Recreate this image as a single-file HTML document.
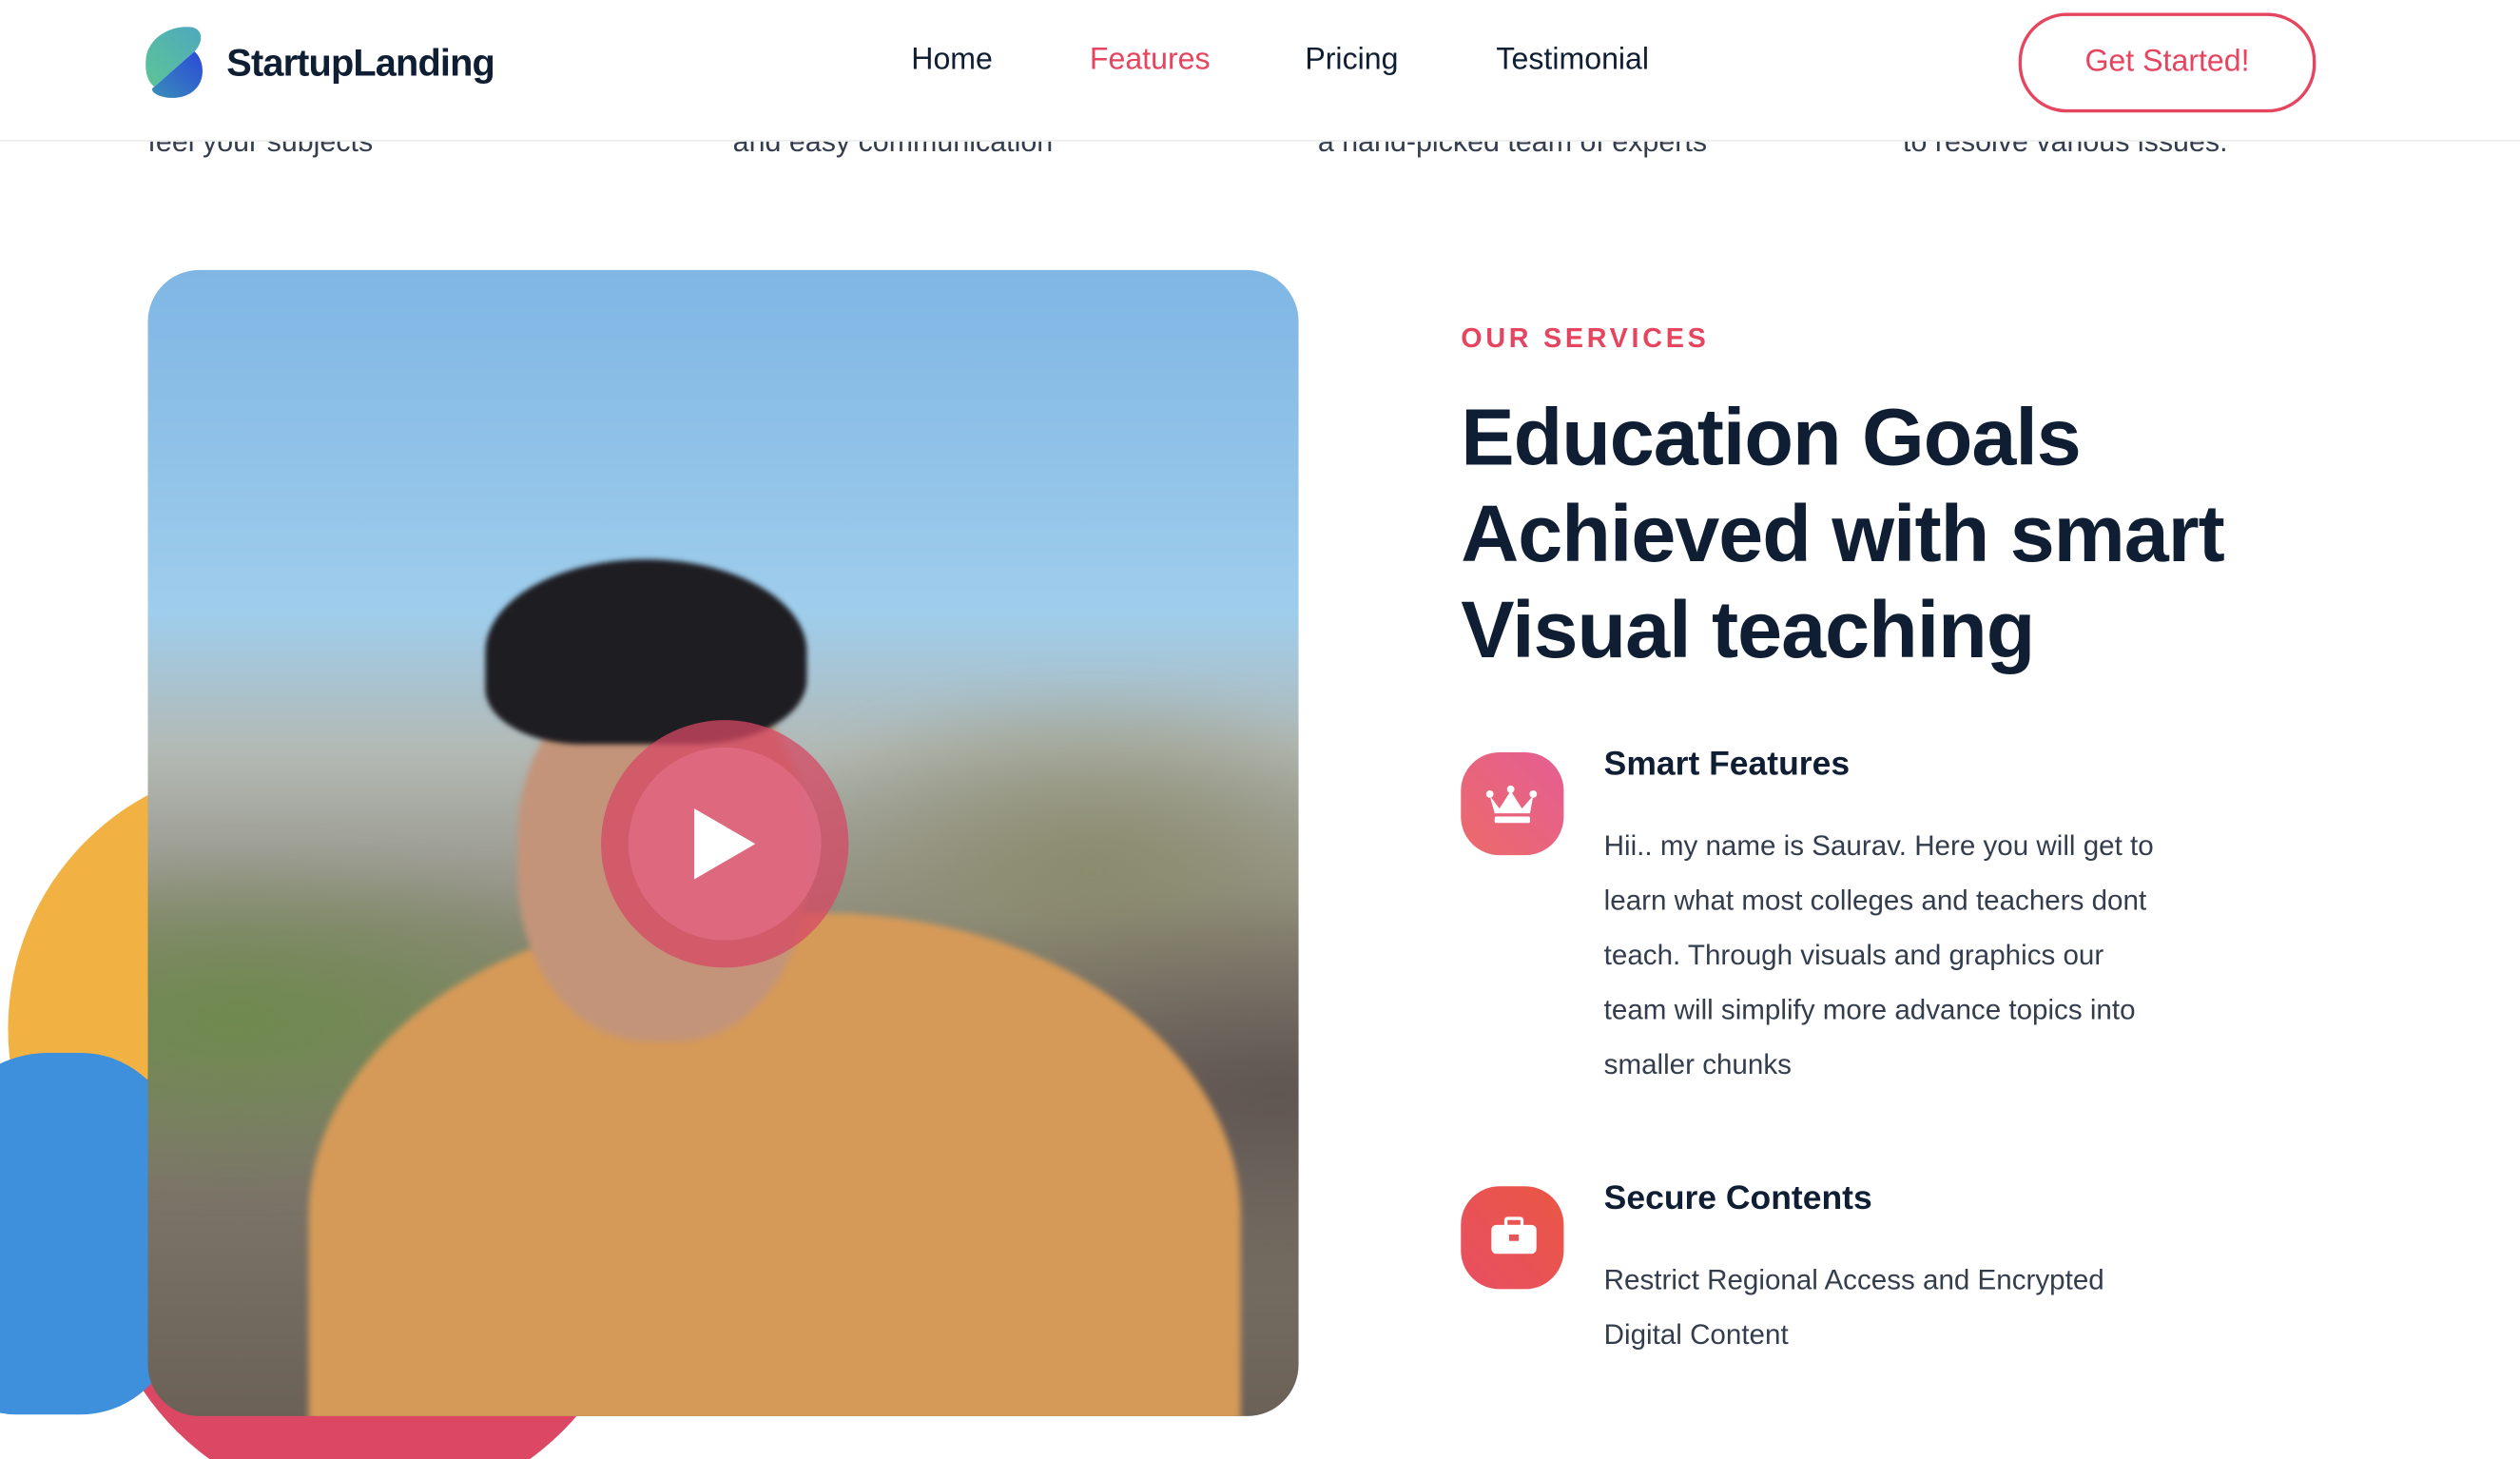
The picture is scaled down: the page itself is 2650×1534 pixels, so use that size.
<!DOCTYPE html>
<html><head><meta charset="utf-8"><style>
html,body{margin:0;padding:0;overflow:hidden;background:#fff;width:2650px;height:1534px}
#w{width:1568px;height:908px;position:relative;transform:scale(1.69005);transform-origin:0 0;font-family:"Liberation Sans",sans-serif;color:#0f1e33;overflow:hidden}
.a{position:absolute}
.nav a{position:absolute;top:27px;font-size:19px;color:#0f1e33}
.sub{font-size:18px;color:#333d4d;top:78px}
p.t{margin:0;font-size:17.5px;line-height:34px;color:#333d4d}
</style></head><body><div id="w">
<div class="a sub" style="left:92px">feel your subjects</div>
<div class="a sub" style="left:456px">and easy communication</div>
<div class="a sub" style="left:820px">a hand-picked team of experts</div>
<div class="a sub" style="left:1184px">to resolve various issues.</div>
<div class="a" style="left:0;top:0;width:1568px;height:87px;background:#fff;border-bottom:1px solid #eee"></div>
<svg class="a" style="left:90px;top:15px" width="38" height="48" viewBox="0 0 38 48"><defs><linearGradient id="g1" x1="0" y1="1" x2="1" y2="0"><stop offset="0" stop-color="#5cc597"/><stop offset="1" stop-color="#4ea8bd"/></linearGradient><linearGradient id="g2" x1="1" y1="0" x2="0" y2="1"><stop offset="0" stop-color="#2a48d8"/><stop offset="1" stop-color="#3a8fb8"/></linearGradient></defs><path d="M30 2C37 4 36 12 31 17L6 39C1 35 0 28 1 20 3 8 17 0 30 2Z" fill="url(#g1)"/><path d="M31 17C37 22 38 34 32 40 26 47 14 47 8 44 4 42 4 40 6 39Z" fill="url(#g2)"/></svg>
<div class="a" style="left:141px;top:26px;font-size:23.5px;font-weight:bold;letter-spacing:-0.5px">StartupLanding</div>
<div class="nav"><a style="left:567px">Home</a><a style="left:678px;color:#e5455f">Features</a><a style="left:812px">Pricing</a><a style="left:931px">Testimonial</a></div>
<div class="a" style="left:1256px;top:8px;width:181px;height:58px;border:2px solid #e5455f;border-radius:30px;color:#e5455f;font-size:19px;text-align:center;line-height:58px">Get Started!</div>
<div class="a" style="left:5px;top:475px;width:330px;height:330px;border-radius:50%;background:#f1b243"></div>
<div class="a" style="left:60px;top:600px;width:340px;height:340px;border-radius:50%;background:#dc4763"></div>
<div class="a" style="left:-40px;top:655px;width:150px;height:225px;border-radius:70px 60px 60px 50px;background:#3e90dc"></div>
<div class="a" style="left:92px;top:168px;width:716px;height:713px;border-radius:32px;overflow:hidden;background:linear-gradient(#7fb6e4 0%,#9fcdec 30%,#b3b9b4 42%,#8e8a7c 58%,#6b6157 100%)">
 <div class="a" style="left:-20px;top:260px;width:760px;height:460px;background:radial-gradient(ellipse at 10% 45%,#6d8a4c 0,transparent 30%),radial-gradient(ellipse at 95% 55%,#5f5450 0,transparent 35%),radial-gradient(ellipse at 80% 25%,#8a8a6c 0,transparent 25%);filter:blur(10px)"></div>
 <div class="a" style="left:100px;top:400px;width:580px;height:420px;border-radius:45% 45% 0 0;background:#d69a58;filter:blur(2px)"></div>
 <div class="a" style="left:230px;top:250px;width:180px;height:230px;border-radius:45%;background:#c39479;filter:blur(2px)"></div>
 <div class="a" style="left:210px;top:180px;width:200px;height:115px;border-radius:50% 50% 35% 30%;background:#1e1d22;filter:blur(1.5px)"></div>
 <div class="a" style="left:282px;top:280px;width:154px;height:154px;border-radius:50%;background:rgba(214,72,100,.75)"></div>
 <div class="a" style="left:299px;top:297px;width:120px;height:120px;border-radius:50%;background:rgba(225,110,135,.75)"></div>
 <svg class="a" style="left:338px;top:333px" width="42" height="48"><path d="M2 2L40 24 2 46Z" fill="#fff"/></svg>
</div>
<div class="a" style="left:909px;top:201px;font-size:17px;font-weight:bold;color:#e5455f;letter-spacing:2.2px">OUR SERVICES</div>
<div class="a" style="left:909px;top:242px;font-size:50px;font-weight:bold;line-height:60px;letter-spacing:-0.6px">Education Goals<br>Achieved with smart<br>Visual teaching</div>
<div class="a" style="left:909px;top:468px;width:64px;height:64px;border-radius:24px;background:linear-gradient(45deg,#ec6a6a,#e45e93)"></div>
<svg class="a" style="left:923px;top:487px" width="36" height="28" viewBox="0 0 36 28"><path d="M4 8L10 16 17 5 24 16 31 8 29 19H7Z" fill="#fff"/><circle cx="4" cy="7" r="2.3" fill="#fff"/><circle cx="17" cy="4" r="2.3" fill="#fff"/><circle cx="31" cy="7" r="2.3" fill="#fff"/><rect x="7" y="21" width="22" height="4" rx="1" fill="#fff"/></svg>
<div class="a" style="left:998px;top:464px;font-size:21px;font-weight:bold">Smart Features</div>
<div class="a" style="left:998px;top:509px;width:346px"><p class="t">Hii.. my name is Saurav. Here you will get to learn what most colleges and teachers dont teach. Through visuals and graphics our team will simplify more advance topics into smaller chunks</p></div>
<div class="a" style="left:909px;top:738px;width:64px;height:64px;border-radius:24px;background:linear-gradient(45deg,#e94f62,#e95744)"></div>
<svg class="a" style="left:927px;top:756px" width="30" height="26" viewBox="0 0 30 26"><rect x="10" y="2" width="10" height="5" rx="1" fill="none" stroke="#fff" stroke-width="2"/><rect x="1" y="6" width="28" height="18" rx="3" fill="#fff"/><rect x="12" y="12" width="6" height="4" fill="#e9535a"/></svg>
<div class="a" style="left:998px;top:734px;font-size:21px;font-weight:bold">Secure Contents</div>
<div class="a" style="left:998px;top:779px;width:340px"><p class="t">Restrict Regional Access and Encrypted Digital Content</p></div>
</div></body></html>
